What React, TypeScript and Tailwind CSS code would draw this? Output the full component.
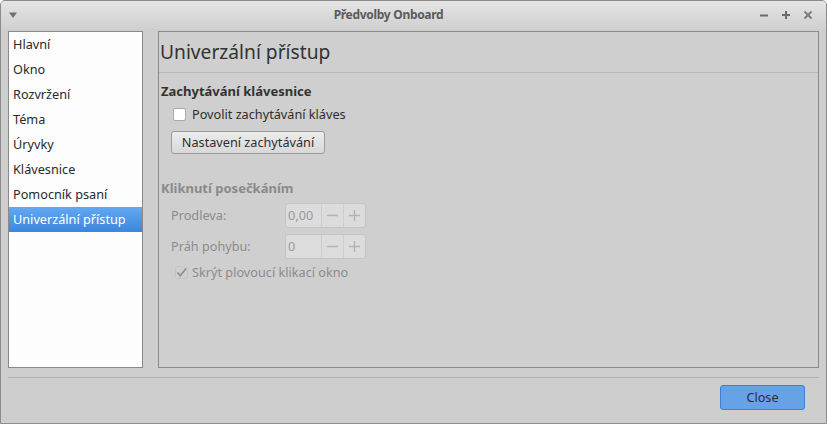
import React from "react";

const items = [
  "Hlavní",
  "Okno",
  "Rozvržení",
  "Téma",
  "Úryvky",
  "Klávesnice",
  "Pomocník psaní",
  "Univerzální přístup",
];

function Spin({ value }: { value: string }) {
  return (
    <div className="flex h-[25px] w-[81px] rounded-[3px] border border-[#c4c4c4] bg-[#dcdcdc] text-[#9a9a9a]">
      <div className="flex flex-1 items-center pl-[2px]">{value}</div>
      <div className="flex w-[22px] items-center justify-center border-l border-[#cdcdcd]">
        <svg width="11" height="11" viewBox="0 0 11 11"><path d="M0 5.5h11" stroke="#b3b3b3" strokeWidth="1.4" /></svg>
      </div>
      <div className="flex w-[22px] items-center justify-center border-l border-[#cdcdcd]">
        <svg width="11" height="11" viewBox="0 0 11 11"><path d="M0 5.5h11M5.5 0v11" stroke="#b3b3b3" strokeWidth="1.4" /></svg>
      </div>
    </div>
  );
}

export default function App() {
  return (
    <div
      className="flex h-[424px] w-[827px] flex-col overflow-hidden rounded-t-[5px] border border-[#8c8c8c] bg-[#cecece] text-[12.7px] text-[#2e2e2e]"
      style={{ fontFamily: '"Noto Sans", "Open Sans", sans-serif' }}
    >
      {/* title bar */}
      <div className="flex h-[28px] shrink-0 items-center bg-gradient-to-b from-[#e4e4e4] to-[#d0d0d0] px-[7px]">
        <svg width="10" height="8" viewBox="0 0 10 8"><path d="M1 1.5h8L5 7z" fill="#707070" /></svg>
        <div className="flex-1 text-center text-[12px] font-bold tracking-[-0.3px] text-[#5a5a5a]">Předvolby Onboard</div>
        <div className="flex items-center gap-[12px] pr-[6px]">
          <svg width="10" height="10" viewBox="0 0 10 10"><path d="M1 5.5h8" stroke="#6a6a6a" strokeWidth="2" /></svg>
          <svg width="10" height="10" viewBox="0 0 10 10"><path d="M1 5h8M5 1v8" stroke="#6a6a6a" strokeWidth="2" /></svg>
          <svg width="10" height="10" viewBox="0 0 10 10"><path d="M1.5 1.5l7 7M8.5 1.5l-7 7" stroke="#7a7a7a" strokeWidth="1.8" /></svg>
        </div>
      </div>

      {/* body */}
      <div className="flex flex-1 flex-col px-[7px] pt-[2px]">
        <div className="flex h-[337px] gap-[15px]">
          <div className="w-[135px] border border-[#8a8a8a] bg-[#fdfdfd]">
            {items.map((it, i) => (
              <div
                key={it}
                className={
                  "flex h-[25px] items-center pl-[4px] " +
                  (i === items.length - 1
                    ? "bg-gradient-to-b from-[#63a8f1] to-[#3b87dd] text-white"
                    : "text-[#2a2a2a]")
                }
              >
                {it}
              </div>
            ))}
          </div>
          <div className="flex flex-1 flex-col border border-[#8a8a8a] bg-[#cfcfcf]">
            <div className="h-[41px] border-b border-[#b9b9b9] pl-[1px] pt-[5px] text-[19.2px] leading-[30px] text-[#333]">
              Univerzální přístup
            </div>
            <div className="flex flex-col pl-[2px]">
              <div className="mt-[8px] text-[13px] font-bold leading-[20px] text-[#333]">Zachytávání klávesnice</div>
              <div className="ml-[12px] mt-[4px] flex items-center gap-[6px]">
                <div className="h-[13px] w-[13px] rounded-[2px] border border-[#a9a9a9] bg-white" />
                <span className="leading-[18px]">Povolit zachytávání kláves</span>
              </div>
              <div className="ml-[10px] mt-[8px] flex h-[23px] w-[154px] items-center justify-center rounded-[3px] border border-[#9a9a9a] bg-gradient-to-b from-[#ececec] to-[#d8d8d8] text-[#2e2e2e]">
                Nastavení zachytávání
              </div>
              <div className="mt-[24px] text-[13px] font-bold leading-[20px] text-[#8a8a8a]">Kliknutí posečkáním</div>
              <div className="ml-[10px] mt-[5px] flex items-center text-[#8c8c8c]">
                <span className="w-[114px]">Prodleva:</span>
                <Spin value="0,00" />
              </div>
              <div className="ml-[10px] mt-[6px] flex items-center text-[#8c8c8c]">
                <span className="w-[114px]">Práh pohybu:</span>
                <Spin value="0" />
              </div>
              <div className="ml-[14px] mt-[3px] flex items-center gap-[4px] text-[#8c8c8c]">
                <svg width="13" height="13" viewBox="0 0 13 13">
                  <rect x="0.5" y="0.5" width="12" height="12" rx="2" fill="none" stroke="#c4c4c4" />
                  <path d="M2.5 6.5l2.8 3.3 5.7-7.3" stroke="#8c8c8c" strokeWidth="1.6" fill="none" />
                </svg>
                <span className="leading-[20px]">Skrýt plovoucí klikací okno</span>
              </div>
            </div>
          </div>
        </div>
        <div className="mt-[9px] h-px w-[811px] bg-[#b2b2b2]" />
        <div className="flex justify-end pr-[14px] pt-[7px]">
          <div className="flex h-[25px] w-[85px] items-center justify-center rounded-[3px] border border-[#3a80d6] bg-[#68a2e6] text-[#2e2e2e]">
            Close
          </div>
        </div>
      </div>
    </div>
  );
}
